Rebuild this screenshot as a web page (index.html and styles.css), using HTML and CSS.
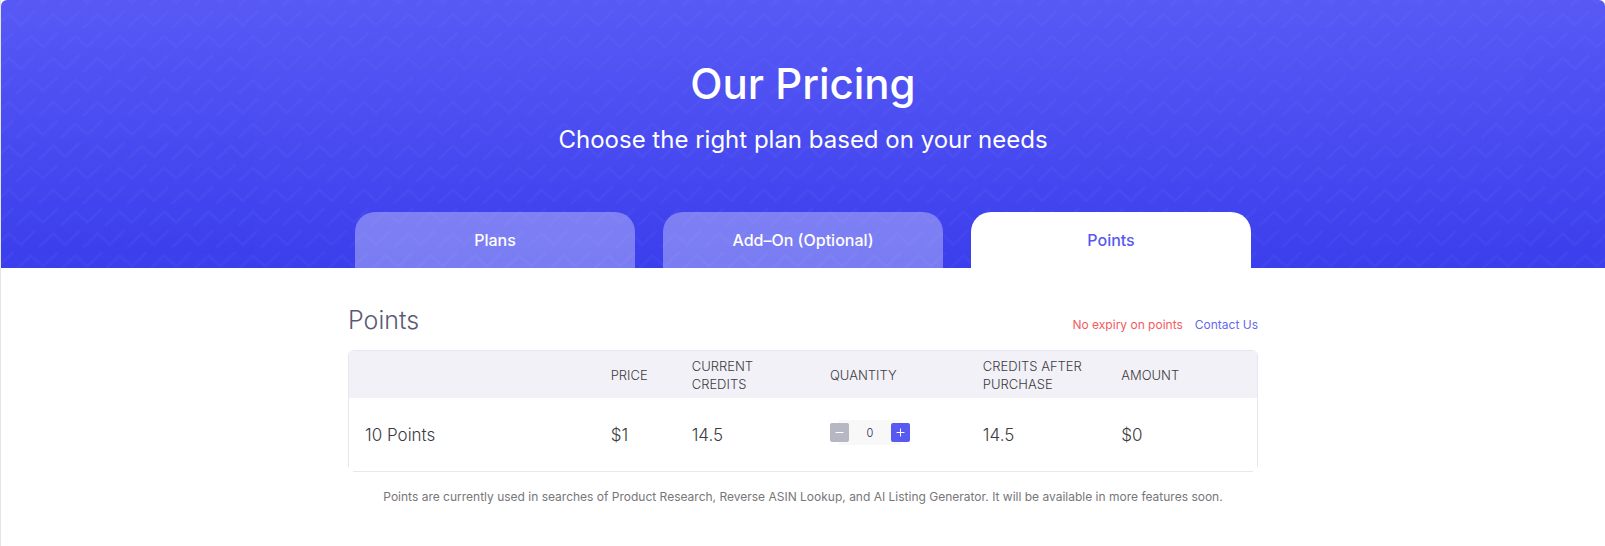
FILE: index.html
```html
<!DOCTYPE html>
<html lang="en">
<head>
<meta charset="utf-8">
<meta name="viewport" content="width=device-width, initial-scale=1">
<title>Our Pricing</title>
<link rel="stylesheet" href="styles.css">
</head>
<body>
<main class="page">
  <header class="hero">
    <svg class="hero-pattern" aria-hidden="true">
      <defs>
        <pattern id="zigzag" width="44.4" height="43.9" patternUnits="userSpaceOnUse" x="10" y="28">
          <g fill="none" stroke="#7c80ff" stroke-width="2.6" stroke-linecap="round">
            <path d="M6 21.500 20 8 32 19 46 5.500M-38.400 21.500-24.400 8-12.400 19 1.600 5.500"/>
            <path d="M28.200 43.500 42.200 30 54.200 41 68.200 27.500M-16.200 43.500-2.200 30 9.800 41 23.800 27.500"/>
          </g>
        </pattern>
      </defs>
      <rect width="100%" height="100%" fill="url(#zigzag)"/>
    </svg>
    <h1 class="hero-title">Our Pricing</h1>
    <p class="hero-subtitle">Choose the right plan based on your needs</p>
    <div class="tabs" role="tablist">
      <button class="tab" type="button" role="tab" aria-selected="false">Plans</button>
      <button class="tab" type="button" role="tab" aria-selected="false">Add–On (Optional)</button>
      <button class="tab tab-active" type="button" role="tab" aria-selected="true">Points</button>
    </div>
  </header>
  <section class="points">
    <div class="points-head">
      <h2 class="points-title">Points</h2>
      <p class="points-links"><span class="expiry">No expiry on points</span><a class="contact" href="#contact">Contact Us</a></p>
    </div>
    <div class="card">
      <table class="points-table">
        <colgroup><col class="col-name"><col class="col-price"><col class="col-current"><col class="col-quantity"><col class="col-after"><col class="col-amount"></colgroup>
        <thead>
          <tr><td></td><th scope="col">PRICE</th><th scope="col">CURRENT<br>CREDITS</th><th scope="col">QUANTITY</th><th scope="col">CREDITS AFTER<br>PURCHASE</th><th scope="col">AMOUNT</th></tr>
        </thead>
        <tbody>
          <tr>
            <th scope="row">10 Points</th>
            <td>$1</td>
            <td>14.5</td>
            <td>
              <div class="stepper">
                <button class="step step-minus" type="button" aria-label="Decrease quantity"><svg viewBox="0 0 19 19" aria-hidden="true"><path d="M5.500 9.500h8"/></svg></button>
                <input class="step-value" type="text" inputmode="numeric" value="0" aria-label="Quantity">
                <button class="step step-plus" type="button" aria-label="Increase quantity"><svg viewBox="0 0 19 19" aria-hidden="true"><path d="M5.500 9.500h8M9.500 5.500v8"/></svg></button>
              </div>
            </td>
            <td>14.5</td>
            <td>$0</td>
          </tr>
        </tbody>
      </table>
    </div>
    <p class="note">Points are currently used in searches of Product Research, Reverse ASIN Lookup, and AI Listing Generator. It will be available in more features soon.</p>
  </section>
</main>
</body>
</html>
```
FILE: styles.css
```css
* {
  box-sizing: border-box;
}

body {
  margin: 0;
  background: #fff;
  color: #3c3b40;
  font-family: Inter, "Liberation Sans", sans-serif;
}

h1, h2, p {
  margin: 0;
}

button, input {
  font: inherit;
}

.page {
  min-height: 100vh;
  border-left: 1px solid #e4e4e8;
}

.hero {
  position: relative;
  padding: 56px 24px 0;
  overflow: hidden;
  border-radius: 6px 6px 0 0;
  background: linear-gradient(#585af5, #3b3eec);
  color: #fff;
  text-align: center;
}

.hero-pattern {
  position: absolute;
  inset: 0;
  width: 100%;
  height: 100%;
  opacity: 0.1;
}

.hero-title,
.hero-subtitle,
.tabs {
  position: relative;
}

.hero-title {
  font-size: 42px;
  font-weight: 500;
  line-height: 56px;
}

.hero-subtitle {
  margin-top: 12px;
  font-size: 24px;
  line-height: 32px;
}

.tabs {
  display: flex;
  justify-content: center;
  gap: 28px;
  margin-top: 56px;
}

.tab {
  flex: 0 1 280px;
  height: 56px;
  padding: 0 8px;
  border: 0;
  border-radius: 20px 20px 0 0;
  background: rgba(255, 255, 255, 0.32);
  color: #fff;
  font-size: 16px;
  font-weight: 500;
  cursor: pointer;
}

.tab-active {
  background: #fff;
  color: #5759ef;
}

.points {
  max-width: 910px;
  margin: 0 auto;
  padding: 36px 0 32px;
}

.points-head {
  display: flex;
  align-items: baseline;
  justify-content: space-between;
  margin-bottom: 14px;
}

.points-title {
  color: #5d5877;
  font-size: 25px;
  font-weight: 300;
  line-height: 32px;
}

.points-links {
  display: flex;
  gap: 12px;
  font-size: 12px;
  line-height: 16px;
}

.expiry {
  color: #f45b60;
}

.contact {
  color: #6668ee;
  text-decoration: none;
}

.card {
  position: relative;
  overflow: hidden;
  border: 1px solid #e7e7f1;
  border-radius: 6px;
}

/* The outline is left open at the two bottom corners. */
.card {
  border-bottom: 0;
  border-radius: 6px 6px 0 0;
  border-left: 0;
  border-right: 0;
}

.card::before,
.card::after {
  content: "";
  position: absolute;
  pointer-events: none;
}

.card::before {
  inset: 0 0 5px;
  border: solid #e7e7f1;
  border-width: 0 1px;
}

.card::after {
  right: 5px;
  bottom: 0;
  left: 5px;
  height: 1px;
  background: #e7e7f1;
}

.points-table {
  width: 100%;
  table-layout: fixed;
  border-collapse: collapse;
}

.col-name { width: 27%; }
.col-price { width: 8.9%; }
.col-current { width: 15.2%; }
.col-quantity { width: 16.8%; }
.col-after { width: 15.2%; }
.col-amount { width: 16.9%; }

.points-table th,
.points-table td {
  padding: 0 0 0 17px;
  font-weight: 300;
  text-align: left;
  vertical-align: middle;
}

.points-table thead {
  background: #f2f1f7;
  font-size: 13px;
  line-height: 18px;
}

.points-table thead tr {
  height: 47px;
}

.points-table tbody {
  font-size: 17px;
  line-height: 24px;
}

.points-table tbody tr {
  height: 74px;
}

.stepper {
  display: flex;
  align-items: center;
  margin-bottom: 5px;
}

.step {
  z-index: 1;
  flex: none;
  width: 19px;
  height: 19px;
  padding: 0;
  border: 0;
  border-radius: 2px;
  cursor: pointer;
}

.step svg {
  display: block;
  fill: none;
  stroke: #fff;
  stroke-width: 1;
}

.step-minus {
  background: #b7b6c3;
}

.step-plus {
  background: #5759f1;
}

.step-value {
  width: 62px;
  height: 25px;
  margin: 0 -10px;
  padding: 0;
  border: 0;
  background: #f8f8f9;
  color: #28265a;
  font-size: 11px;
  text-align: center;
}

.note {
  margin-top: 16px;
  color: #77767a;
  font-size: 12px;
  line-height: 18px;
  text-align: center;
}
```
